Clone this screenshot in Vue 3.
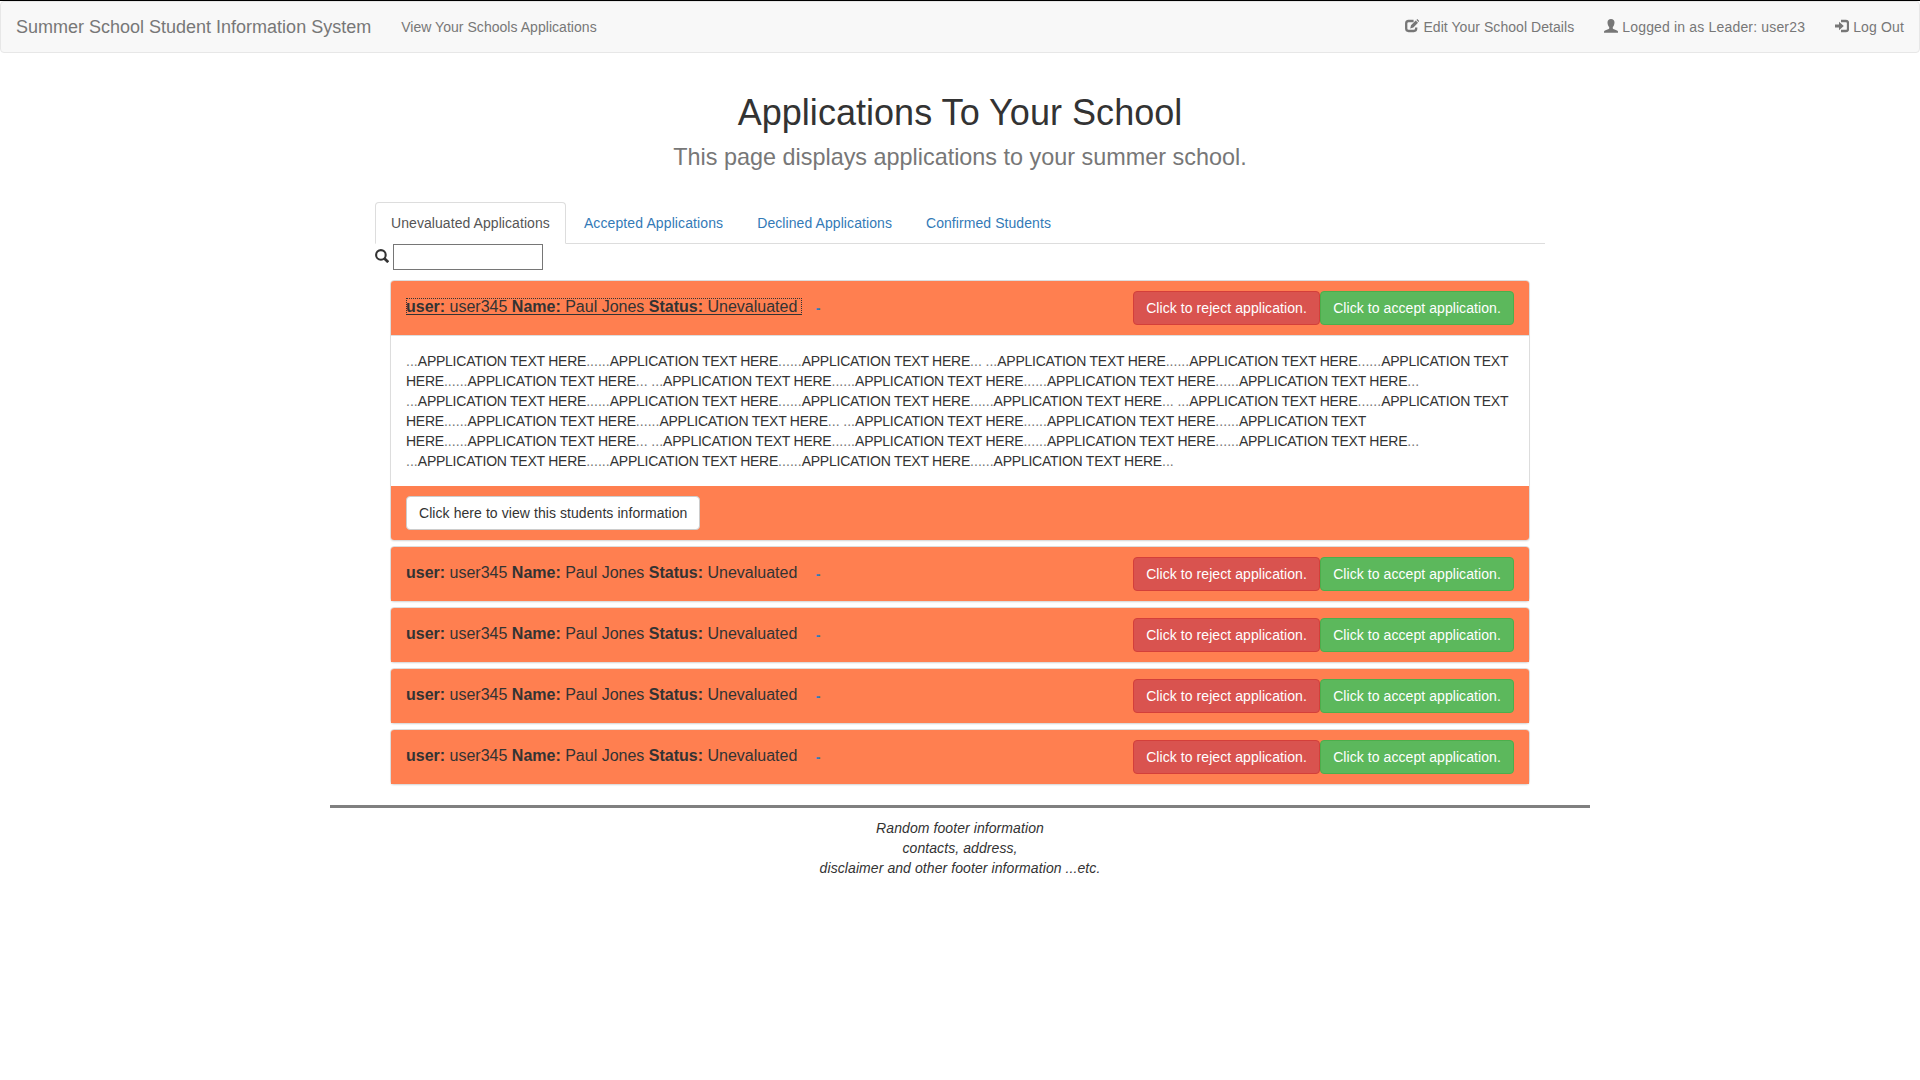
<script setup>
const tabs = [
  { label: 'Unevaluated Applications', spacing: 0.07 },
  { label: 'Accepted Applications', spacing: 0.11 },
  { label: 'Declined Applications', spacing: 0.08 },
  { label: 'Confirmed Students', spacing: 0.07 },
]
const t = 'APPLICATION TEXT HERE'
const textLines = [
  `...${t}......${t}......${t}... ...${t}......${t}......APPLICATION TEXT`,
  `HERE......${t}... ...${t}......${t}......${t}......${t}...`,
  `...${t}......${t}......${t}......${t}... ...${t}......APPLICATION TEXT`,
  `HERE......${t}......${t}... ...${t}......${t}......APPLICATION TEXT`,
  `HERE......${t}... ...${t}......${t}......${t}......${t}...`,
  `...${t}......${t}......${t}......${t}...`,
].map((line) => line.split(/(\.+)/).filter(Boolean))
const applications = [1, 2, 3, 4, 5].map((id) => ({
  id, user: 'user345', name: 'Paul Jones', status: 'Unevaluated', open: id === 1,
}))
</script>

<template>
  <div class="page">
    <nav class="navbar">
      <a class="brand">Summer School Student Information System</a>
      <a class="nav-link">View Your Schools Applications</a>
      <div class="nav-right">
        <a class="nav-link edit">
          <svg class="icon" viewBox="0 0 14 14"><path d="M8.600 2H3.600Q1.200 2 1.200 4.400v5.200q0 2.400 2.400 2.400h5.200q2.400 0 2.400-2.400V8.600" fill="none" stroke="currentColor" stroke-width="2.300" /><path d="M5.200 9.500l.8-3.300L10.700 1.600l2.300 2.200L8.400 8.600zM11.400 1l.9-.9 2 1.900-.8 1z" fill="currentColor" /></svg>
          <span>Edit Your School Details</span></a>
        <a class="nav-link user">
          <svg class="icon" viewBox="0 0 14 14"><path d="M7 0C9.200 0 10.500 1.400 10.500 3.600c0 1.900-.7 3.500-1.700 4.500v1.100c0 .4.200.6.600.8l3.600 1.500c.6.300 1 .7 1 1.200V13.700H0v-1c0-.5.4-.9 1-1.200L4.600 10c.4-.2.600-.4.600-.8V8.100c-1-1-1.700-2.600-1.700-4.500C3.500 1.400 4.800 0 7 0z" fill="currentColor" /></svg>
          <span>Logged in as Leader: user23</span></a>
        <a class="nav-link logout">
          <svg class="icon" viewBox="0 0 14 14"><path d="M6 2h5q2 0 2 2v6q0 2-2 2H6" fill="none" stroke="currentColor" stroke-width="2.300" /><path d="M0 5.500h4V2.700L8.800 7 4 11.300V8.500H0z" fill="currentColor" /></svg>
          <span>Log Out</span></a>
      </div>
    </nav>

    <header class="title">
      <h1>Applications To Your School</h1>
      <p>This page displays applications to your summer school.</p>
    </header>

    <main class="content">
      <ul class="tabs">
        <li v-for="(tab, i) in tabs" :key="tab.label" :class="{ active: i === 0 }"><a :style="{ letterSpacing: tab.spacing + 'px' }">{{ tab.label }}</a></li>
      </ul>
      <div class="search">
        <svg class="icon" viewBox="0 0 14 14"><circle cx="5.900" cy="5.900" r="4.800" fill="none" stroke="currentColor" stroke-width="2.100" /><path d="M9.200 9.200l4 4" stroke="currentColor" stroke-width="2.700" /></svg>
        <input type="text" />
      </div>

      <section class="panels">
        <article v-for="app in applications" :key="app.id" class="panel">
          <div class="panel-heading">
            <h4><a class="panel-title" :class="{ focused: app.open }"><b>user:</b> {{ app.user }} <b>Name:</b> {{ app.name }} <b>Status:</b> {{ app.status }}</a></h4>
            <a class="dash">-</a>
            <div class="actions">
              <button class="btn danger">Click to reject application.</button>
              <button class="btn success">Click to accept application.</button>
            </div>
          </div>
          <template v-if="app.open">
            <div class="panel-body">
              <div v-for="(line, i) in textLines" :key="i"><span v-for="(part, j) in line" :key="j" :class="part[0] === '.' ? 'dots' : 'words'">{{ part }}</span></div>
            </div>
            <div class="panel-footer"><button class="btn plain">Click here to view this students information</button></div>
          </template>
        </article>
      </section>
    </main>

    <footer class="footer">
      <div>Random footer information</div>
      <div>contacts, address,</div>
      <div>disclaimer and other footer information ...etc.</div>
    </footer>
  </div>
</template>

<style>
body { margin: 0; background: #fff; }
</style>

<style scoped>
* { box-sizing: border-box; }
.page {
  font: 14px/20px "Liberation Sans", Arial, sans-serif;
  color: #333;
  border-top: 1px solid #000;
}
.icon { display: block; flex: none; width: 14px; height: 14px; }
.navbar {
  display: flex;
  height: 52px;
  padding: 0 15px;
  background: #f8f8f8;
  border: 1px solid #e7e7e7;
  border-radius: 4px;
  color: #777;
}
.brand { padding: 15px 15px 15px 0; font-size: 18px; }
.nav-link { padding: 15px; white-space: nowrap; letter-spacing: .04px; }
.nav-right { display: flex; margin-left: auto; margin-right: -15px; }
.nav-right .nav-link { display: flex; gap: 4px; }
.nav-right .icon { margin-top: 2px; }
.nav-right .edit { letter-spacing: .06px; }
.nav-right .user { letter-spacing: .17px; }
.nav-right .logout { letter-spacing: .15px; }
.title { text-align: center; padding-top: 40px; }
.title h1 { margin: 0; font-size: 36px; font-weight: 400; line-height: 40px; letter-spacing: .04px; }
.title p { margin: 9px 0 0; font-size: 23.4px; line-height: 30px; color: #777; }
.content { width: 1170px; margin: 30px auto 0; }
.tabs { display: flex; height: 42px; margin: 0; padding: 0; list-style: none; border-bottom: 1px solid #ddd; }
.tabs li { height: 42px; margin-right: 2px; }
.tabs a { display: block; height: 42px; padding: 10px 15px; border: 1px solid transparent; border-radius: 4px 4px 0 0; color: #337ab7; }
.tabs .active a { color: #555; background: #fff; border-color: #ddd #ddd transparent; }
.search { display: flex; align-items: center; gap: 4px; height: 26px; }
.search .icon { margin-bottom: 2px; }
.search input { width: 150px; height: 26px; padding: 1px 2px; border: 1px solid #767676; background: #fff; }
.panels { display: flex; flex-direction: column; gap: 5px; margin: 10px 15px 0; }
.panel { border: 1px solid #ddd; border-radius: 4px; background: #fff; box-shadow: 0 1px 1px rgba(0, 0, 0, .05); }
.panel-heading { display: flex; height: 54px; padding: 10px 15px; background: #ff7f50; border-radius: 3px 3px 0 0; }
.panel-heading h4 { margin: 7px 0 0; font-size: 16px; font-weight: 400; line-height: 17px; white-space: nowrap; }
.panel-title { color: #333; }
.focused { display: block; height: 17px; padding-right: 5px; margin-right: -5px; line-height: 17px; outline: 1px dotted #333; outline-offset: -1px; border-bottom: 1px solid #333; }
.dash { margin: 7px 0 0 18.500px; color: #337ab7; font-weight: 700; }
.actions { display: flex; margin-left: auto; }
.btn { height: 34px; padding: 6px 12px; border: 1px solid; border-radius: 4px; font: inherit; letter-spacing: .07px; white-space: nowrap; }
.danger { width: 187px; color: #fff; background: #d9534f; border-color: #d43f3a; }
.success { width: 194px; color: #fff; background: #5cb85c; border-color: #4cae4c; }
.plain { color: #333; background: #fff; border-color: #ccc; }
.panel-body { padding: 15px; border-top: 1px solid #ddd; white-space: nowrap; }
.words { white-space: pre; letter-spacing: -.245px; }
.dots { color: #777; letter-spacing: .04px; }
.panel-footer { height: 54px; padding: 10px 15px; background: #ff7f50; border-radius: 0 0 3px 3px; }
.footer { width: 1260px; margin: 20px auto 0; padding-top: 10px; border-top: 3px solid #808080; text-align: center; font-style: italic; letter-spacing: .08px; }
</style>
